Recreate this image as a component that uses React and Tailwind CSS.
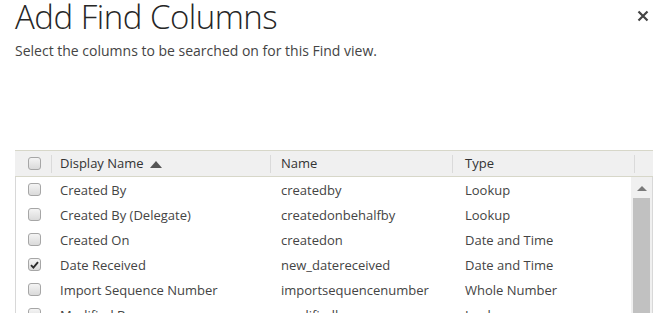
import React from 'react';

const rows = [
  { label: 'Created By', name: 'createdby', type: 'Lookup' },
  { label: 'Created By (Delegate)', name: 'createdonbehalfby', type: 'Lookup' },
  { label: 'Created On', name: 'createdon', type: 'Date and Time' },
  { label: 'Date Received', name: 'new_datereceived', type: 'Date and Time', checked: true },
  { label: 'Import Sequence Number', name: 'importsequencenumber', type: 'Whole Number' },
  { label: 'Modified By', name: 'modifiedby', type: 'Lookup' },
];

function Box({ checked }) {
  return (
    <span className="w-[13px] h-[13px] rounded-[3px] border border-[#a6a6a6] bg-gradient-to-b from-[#f4f4f4] to-[#dadada] flex items-center justify-center">
      {checked && (
        <svg width="9" height="8" viewBox="0 0 9 8">
          <path d="M1 4.2 L3.4 6.6 L8 1.2" fill="none" stroke="#2b2b2b" strokeWidth="1.9" />
        </svg>
      )}
    </span>
  );
}

function Sep() {
  return <div className="w-px h-[18px] bg-[#dadada] shrink-0" />;
}

export default function App() {
  return (
    <div className="w-[672px] h-[313px] overflow-hidden bg-white relative font-['Open_Sans',sans-serif] text-[#444]">
      <div className="pl-[15px]">
        <h1 className="text-[33px] leading-[36px] font-light text-[#262626] tracking-[-0.5px] -mt-[1px]">Add Find Columns</h1>
        <p className="mt-[6px] text-[14px] leading-[20px] text-[#444]">Select the columns to be searched on for this Find view.</p>
      </div>

      <button className="absolute left-[637px] top-[10px] w-[12px] h-[12px]">
        <svg width="12" height="12" viewBox="0 0 12 12">
          <path d="M1.5 1.5 L10.5 10.5 M10.5 1.5 L1.5 10.5" stroke="#444" strokeWidth="2.2" />
        </svg>
      </button>

      <div className="mt-[89px] ml-[15px] w-[638px] border-x border-[#d8d8d8] text-[13px]">
        {/* header */}
        <div className="flex items-center h-[27px] bg-[#f0f0f0] border-y border-[#d7d7c9] -mx-px px-px">
          <div className="w-[35px] shrink-0 pl-[12px] flex items-center"><Box /></div>
          <Sep />
          <div className="w-[218px] shrink-0 pl-[8px] pt-px flex items-center gap-[6px] text-[#333]">
            Display Name
            <svg width="12" height="7" viewBox="0 0 12 7"><path d="M0 7 L6 0 L12 7 Z" fill="#555" /></svg>
          </div>
          <Sep />
          <div className="w-[181px] shrink-0 pl-[10px] pt-px text-[#333]">Name</div>
          <Sep />
          <div className="w-[181px] shrink-0 pl-[12px] pt-px text-[#333]">Type</div>
          <Sep />
          <div className="flex-1" />
        </div>

        {/* body */}
        <div className="flex">
          <div className="flex-1 flex flex-col">
            {rows.map((r) => (
              <div key={r.name} className="flex items-center h-[25px]">
                <div className="w-[35px] shrink-0 pl-[12px] flex items-center"><Box checked={r.checked} /></div>
                <div className="w-px shrink-0" />
                <div className="w-[218px] shrink-0 pl-[8px] pt-[2px]">{r.label}</div>
                <div className="w-px shrink-0" />
                <div className="w-[181px] shrink-0 pl-[10px] pt-[2px]">{r.name}</div>
                <div className="w-px shrink-0" />
                <div className="flex-1 pl-[12px] pt-[2px]">{r.type}</div>
              </div>
            ))}
          </div>
          <div className="w-[21px] shrink-0 bg-[#f0f0f0] flex flex-col items-center pt-[9px]">
            <svg width="10" height="5" viewBox="0 0 10 5"><path d="M0 5 L5 0 L10 5 Z" fill="#7a7a7a" /></svg>
            <div className="mt-[7px] w-[17px] h-[200px] bg-[#c1c1c1]" />
          </div>
        </div>
      </div>
    </div>
  );
}
